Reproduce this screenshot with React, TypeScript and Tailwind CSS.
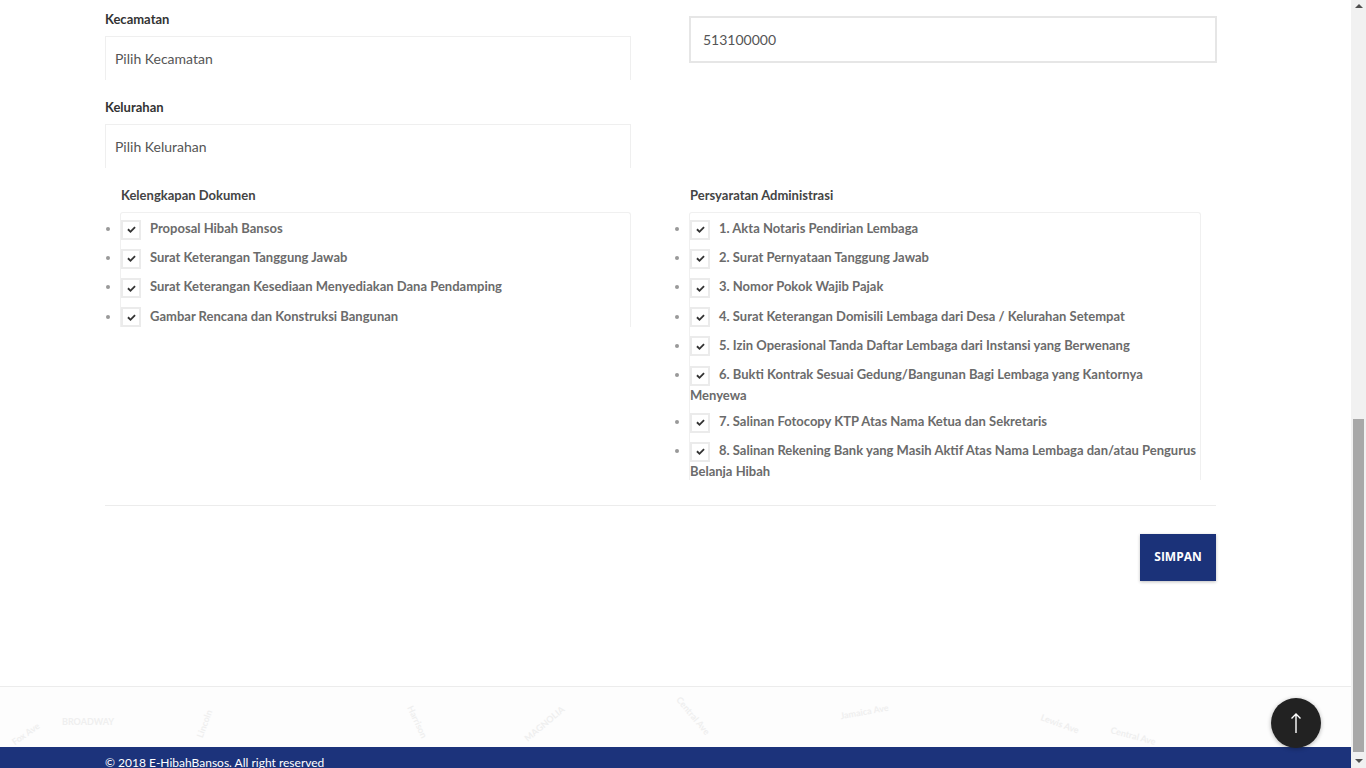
import type { ReactNode } from 'react';

const kelengkapan = [
  'Proposal Hibah Bansos',
  'Surat Keterangan Tanggung Jawab',
  'Surat Keterangan Kesediaan Menyediakan Dana Pendamping',
  'Gambar Rencana dan Konstruksi Bangunan',
];

const persyaratan = [
  '1. Akta Notaris Pendirian Lembaga',
  '2. Surat Pernyataan Tanggung Jawab',
  '3. Nomor Pokok Wajib Pajak',
  '4. Surat Keterangan Domisili Lembaga dari Desa / Kelurahan Setempat',
  '5. Izin Operasional Tanda Daftar Lembaga dari Instansi yang Berwenang',
  '6. Bukti Kontrak Sesuai Gedung/Bangunan Bagi Lembaga yang Kantornya Menyewa',
  '7. Salinan Fotocopy KTP Atas Nama Ketua dan Sekretaris',
  '8. Salinan Rekening Bank yang Masih Aktif Atas Nama Lembaga dan/atau Pengurus Belanja Hibah',
];

// faint street names of the map behind the footer
const mapLabels = [
  { text: 'Fox Ave', x: 10, y: 40, r: -35 },
  { text: 'BROADWAY', x: 62, y: 28, r: 0 },
  { text: 'Lincoln', x: 190, y: 30, r: -70 },
  { text: 'Harrison', x: 400, y: 28, r: 65 },
  { text: 'MAGNOLIA', x: 520, y: 30, r: -40 },
  { text: 'Central Ave', x: 670, y: 22, r: 50 },
  { text: 'Jamaica Ave', x: 840, y: 18, r: -10 },
  { text: 'Central Ave', x: 1110, y: 42, r: 15 },
  { text: 'Lewis Ave', x: 1040, y: 30, r: 20 },
];

function Label({ children }: { children: ReactNode }) {
  return <label className="mb-[7px] block text-[13px] font-bold leading-5 text-[#333]">{children}</label>;
}

function SelectBox({ placeholder }: { placeholder: string }) {
  return (
    <div className="flex h-[44px] items-center border-x border-t border-[#efefef] pl-[9px] text-[14px] text-[#555]">
      {placeholder}
    </div>
  );
}

function CheckBox() {
  return (
    <span className="mr-[9px] inline-flex h-5 w-5 items-center justify-center border-2 border-[#ebebeb] bg-white align-middle">
      <svg width="9" height="7" viewBox="0 0 9 7">
        <path d="M0.3 3.9L1.6 2.6L3.5 4.4L7.4 0.5L8.7 1.8L3.5 7Z" fill="#333" />
      </svg>
    </span>
  );
}

function CheckList({ title, items, boxClass }: { title: string; items: string[]; boxClass: string }) {
  return (
    <div>
      <h4 className="mb-[7px] pl-[1px] text-[13px] font-bold leading-5 text-[#444]">{title}</h4>
      <ul className={`list-disc rounded-t-[3px] border-x border-t border-[#f0f0f0] pt-[6px] ${boxClass}`}>
        {items.map((it) => (
          <li key={it} className="mb-[8.5px] text-[13px] font-bold leading-[18px] text-[#6b6b6b] marker:text-[#999] last:mb-0">
            <CheckBox />
            {it}
          </li>
        ))}
      </ul>
    </div>
  );
}

export default function App() {
  return (
    <div className="flex h-screen overflow-hidden bg-white font-['Lato','Liberation_Sans',sans-serif]">
      <div className="relative flex w-[1351px] flex-col">
        <main className="ml-[105px] w-[1111px]">
          <div className="grid grid-cols-[526px_528px] gap-x-[58px]">
            <div className="pt-[9px]">
              <Label>Kecamatan</Label>
              <SelectBox placeholder="Pilih Kecamatan" />
              <div className="mt-[17px]">
                <Label>Kelurahan</Label>
                <SelectBox placeholder="Pilih Kelurahan" />
              </div>
            </div>
            <div className="pt-[16px]">
              <div className="flex h-[47px] items-center border-2 border-[#e6e6e6] pl-[12px] text-[14px] text-[#555]">
                513100000
              </div>
            </div>
          </div>

          <div className="mt-[17px] grid grid-cols-[526px_528px] gap-x-[58px]">
            <div className="pl-[15px]">
              <CheckList title="Kelengkapan Dokumen" items={kelengkapan} boxClass="w-[511px]" />
            </div>
            <div>
              <CheckList title="Persyaratan Administrasi" items={persyaratan} boxClass="w-[512px]" />
            </div>
          </div>

          <hr className="mt-[25px] border-[#ececec]" />

          <div className="mt-[28px] flex justify-end">
            <button className="h-[47px] w-[76px] bg-[#1b3279] font-['Open_Sans','Liberation_Sans',sans-serif] text-[12px] font-bold text-white shadow-[0_1px_3px_rgba(0,0,0,0.25)]">
              SIMPAN
            </button>
          </div>
        </main>

        <footer className="mt-[105px] border-t border-[#ececec]">
          <div className="relative h-[60px] overflow-hidden bg-[#fdfdfd]">
            {mapLabels.map((l) => (
              <span
                key={l.text + l.x}
                className="absolute whitespace-nowrap text-[9px] font-bold text-[#efefef]"
                style={{ left: l.x, top: l.y, transform: `rotate(${l.r}deg)` }}
              >
                {l.text}
              </span>
            ))}
          </div>
          <div className="h-[60px] bg-[#1c337b] pl-[105px] pt-[6px] text-[12px] leading-5 text-white">
            © 2018 E-HibahBansos. All right reserved
          </div>
        </footer>

        <button className="absolute bottom-[20px] right-[30px] flex h-[50px] w-[50px] items-center justify-center rounded-full bg-[#222] shadow-[0_1px_4px_rgba(0,0,0,0.3)]">
          <svg width="14" height="22" viewBox="0 0 14 22" fill="none">
            <path d="M7 21V2M2.5 6.5L7 2L11.5 6.5" stroke="#fff" strokeWidth="1.4" />
          </svg>
        </button>
      </div>

      {/* scrollbar */}
      <div className="flex w-[15px] flex-col items-center bg-[#f1f1f1]">
        <div className="mt-[4px] h-0 w-0 border-x-[4px] border-b-[4px] border-x-transparent border-b-[#505050]" />
        <div className="mt-[411px] h-[333px] w-[11px] bg-[#a8a8a8]" />
        <div className="mt-[7px] h-0 w-0 border-x-[4px] border-t-[4px] border-x-transparent border-t-[#505050]" />
      </div>
    </div>
  );
}
